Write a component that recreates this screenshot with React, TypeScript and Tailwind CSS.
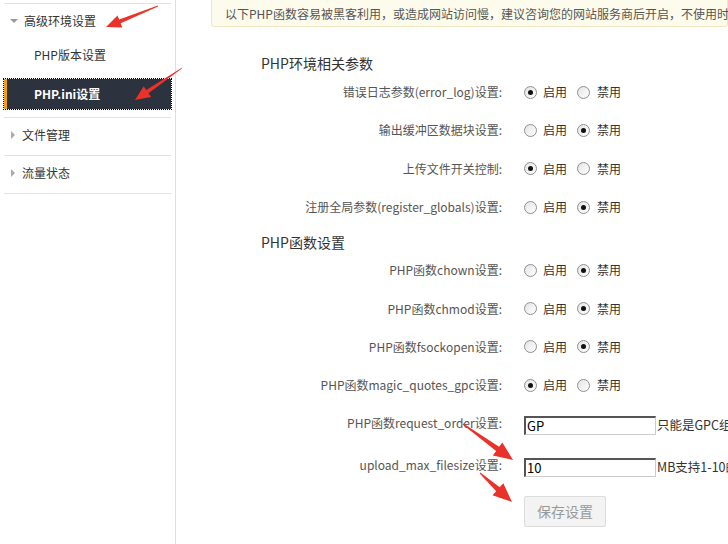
import React from "react";

const font = { fontFamily: '"Noto Sans CJK SC", "Noto Sans", sans-serif' };

type Pt = [number, number];
function arrowPoints(tail: Pt, tip: Pt, headLen: number, headHalf: number, shaftHalf: number, tailHalf: number) {
  const dx = tip[0] - tail[0];
  const dy = tip[1] - tail[1];
  const len = Math.hypot(dx, dy);
  const ux = dx / len, uy = dy / len;
  const nx = -uy, ny = ux;
  const bx = tip[0] - headLen * ux, by = tip[1] - headLen * uy;
  const pts: Pt[] = [
    [tail[0] + tailHalf * nx, tail[1] + tailHalf * ny],
    [bx + shaftHalf * nx, by + shaftHalf * ny],
    [bx + headHalf * nx, by + headHalf * ny],
    tip,
    [bx - headHalf * nx, by - headHalf * ny],
    [bx - shaftHalf * nx, by - shaftHalf * ny],
    [tail[0] - tailHalf * nx, tail[1] - tailHalf * ny],
  ];
  return pts.map((p) => `${p[0].toFixed(1)},${p[1].toFixed(1)}`).join(" ");
}

function Radio({ checked }: { checked: boolean }) {
  return (
    <span className="inline-flex h-[13px] w-[13px] shrink-0 items-center justify-center rounded-full border border-[#8f8f8f] bg-gradient-to-br from-[#e4e4e4] to-white">
      {checked && <span className="h-[5px] w-[5px] rounded-full bg-[#111]" />}
    </span>
  );
}

function RadioRow({ label, on }: { label: string; on: boolean }) {
  return (
    <div className="flex h-[38.3px] items-center">
      <div className="w-[292px] shrink-0 pr-[1px] text-right text-[12px] text-[#555]">{label}</div>
      <div className="ml-[21px] flex items-center whitespace-nowrap text-[12px] text-[#333]">
        <Radio checked={on} />
        <span className="ml-[6px]">启用</span>
        <span className="ml-[10px] flex"><Radio checked={!on} /></span>
        <span className="ml-[7px]">禁用</span>
      </div>
    </div>
  );
}

function InputRow({ label, value, hint }: { label: string; value: string; hint: string }) {
  return (
    <div className="flex h-[42px] items-center">
      <div className="-mt-[5px] w-[292px] shrink-0 pr-[1px] text-right text-[12px] text-[#555]">{label}</div>
      <div className="ml-[21px] flex items-center whitespace-nowrap">
        <div className="flex h-[19px] w-[132px] shrink-0 items-center border-b border-l-2 border-r border-t-2 border-b-[#ccc] border-l-[#555] border-r-[#ccc] border-t-[#555] bg-white pl-[1px] text-[13px] leading-none text-[#000]">
          {value}
        </div>
        <span className="ml-[1px] text-[12.5px] text-[#333]">{hint}</span>
      </div>
    </div>
  );
}

export default function App() {
  return (
    <div className="relative h-[544px] w-[728px] overflow-hidden bg-white" style={font}>
      <div className="flex h-full">
        {/* Sidebar */}
        <div className="h-full w-[176px] shrink-0 border-r border-[#dedede] pl-[4px] pr-[4px]">
          <div className="mt-[3px] border-t border-[#e2e2e2]" />
          <div className="flex h-[34px] items-center text-[12px] text-[#333]">
            <span className="ml-[6px] mr-[6px] inline-block h-0 w-0 border-x-[4px] border-t-[4px] border-x-transparent border-t-[#999]" />
            高级环境设置
          </div>
          <div className="flex h-[34px] items-center pl-[30px] text-[12px] text-[#333]">PHP版本设置</div>
          <div className="mt-[7px] flex h-[30px] items-center border-l-[3px] border-[#f0a010] bg-[#2c323e] pl-[27px] text-[12px] font-bold text-white outline-1 outline-dotted outline-[#000]">
            PHP.ini设置
          </div>
          <div className="mt-[8px] border-t border-[#e2e2e2]" />
          <div className="flex h-[37px] items-center pb-[4px] text-[12px] text-[#333]">
            <span className="ml-[7px] mr-[7px] inline-block h-0 w-0 border-y-[4px] border-l-[4px] border-y-transparent border-l-[#aaa]" />
            文件管理
          </div>
          <div className="border-t border-[#e2e2e2]" />
          <div className="flex h-[37px] items-center pb-[4px] text-[12px] text-[#333]">
            <span className="ml-[7px] mr-[7px] inline-block h-0 w-0 border-y-[4px] border-l-[4px] border-y-transparent border-l-[#aaa]" />
            流量状态
          </div>
          <div className="border-t border-[#e2e2e2]" />
        </div>

        {/* Main */}
        <div className="min-w-0 flex-1 pl-[35px]">
          <div className="-mt-[6px] flex h-[33px] items-center whitespace-nowrap rounded-l-[3px] rounded-b-[3px] border border-[#efe6c2] bg-[#fdfbeb] pl-[13px] pt-[6px] text-[12px] text-[#555]">
            以下PHP函数容易被黑客利用，或造成网站访问慢，建议咨询您的网站服务商后开启，不使用时建议关闭
          </div>

          <div className="pl-[50px]">
            <div className="mt-[26px] h-[20px] text-[14px] leading-[20px] text-[#333]">PHP环境相关参数</div>
            <div className="-ml-[50px]">
              <RadioRow label="错误日志参数(error_log)设置:" on={true} />
              <RadioRow label="输出缓冲区数据块设置:" on={false} />
              <RadioRow label="上传文件开关控制:" on={true} />
              <RadioRow label="注册全局参数(register_globals)设置:" on={false} />
            </div>
            <div className="h-[25px] pt-[6px] text-[14px] leading-[20px] text-[#333]">PHP函数设置</div>
            <div className="-ml-[50px]">
              <RadioRow label="PHP函数chown设置:" on={false} />
              <RadioRow label="PHP函数chmod设置:" on={false} />
              <RadioRow label="PHP函数fsockopen设置:" on={false} />
              <RadioRow label="PHP函数magic_quotes_gpc设置:" on={true} />
              <InputRow label="PHP函数request_order设置:" value="GP" hint="只能是GPC组合的字符串" />
              <InputRow label="upload_max_filesize设置:" value="10" hint="MB支持1-10的整数" />
              <div className="ml-[313px] mt-[8px]">
                <button className="h-[31px] w-[82px] rounded-[2px] border border-[#dcdcdc] bg-[#f3f3f3] text-[14px] text-[#999]">
                  保存设置
                </button>
              </div>
            </div>
          </div>
        </div>
      </div>

      {/* Annotation arrows */}
      <svg className="pointer-events-none absolute left-0 top-0" width="728" height="544">
        <polygon fill="#e8322a" points={arrowPoints([158, 6], [106, 27], 15, 6.5, 2, 0.4)} />
        <polygon fill="#e8322a" points={arrowPoints([182, 68], [135, 100], 15, 6.5, 2, 0.4)} />
        <polygon fill="#e8322a" points={arrowPoints([463, 424], [513, 460], 19, 8, 2.6, 0.5)} />
        <polygon fill="#e8322a" points={arrowPoints([480, 473], [512, 502], 19, 8, 2.6, 0.5)} />
      </svg>
    </div>
  );
}
